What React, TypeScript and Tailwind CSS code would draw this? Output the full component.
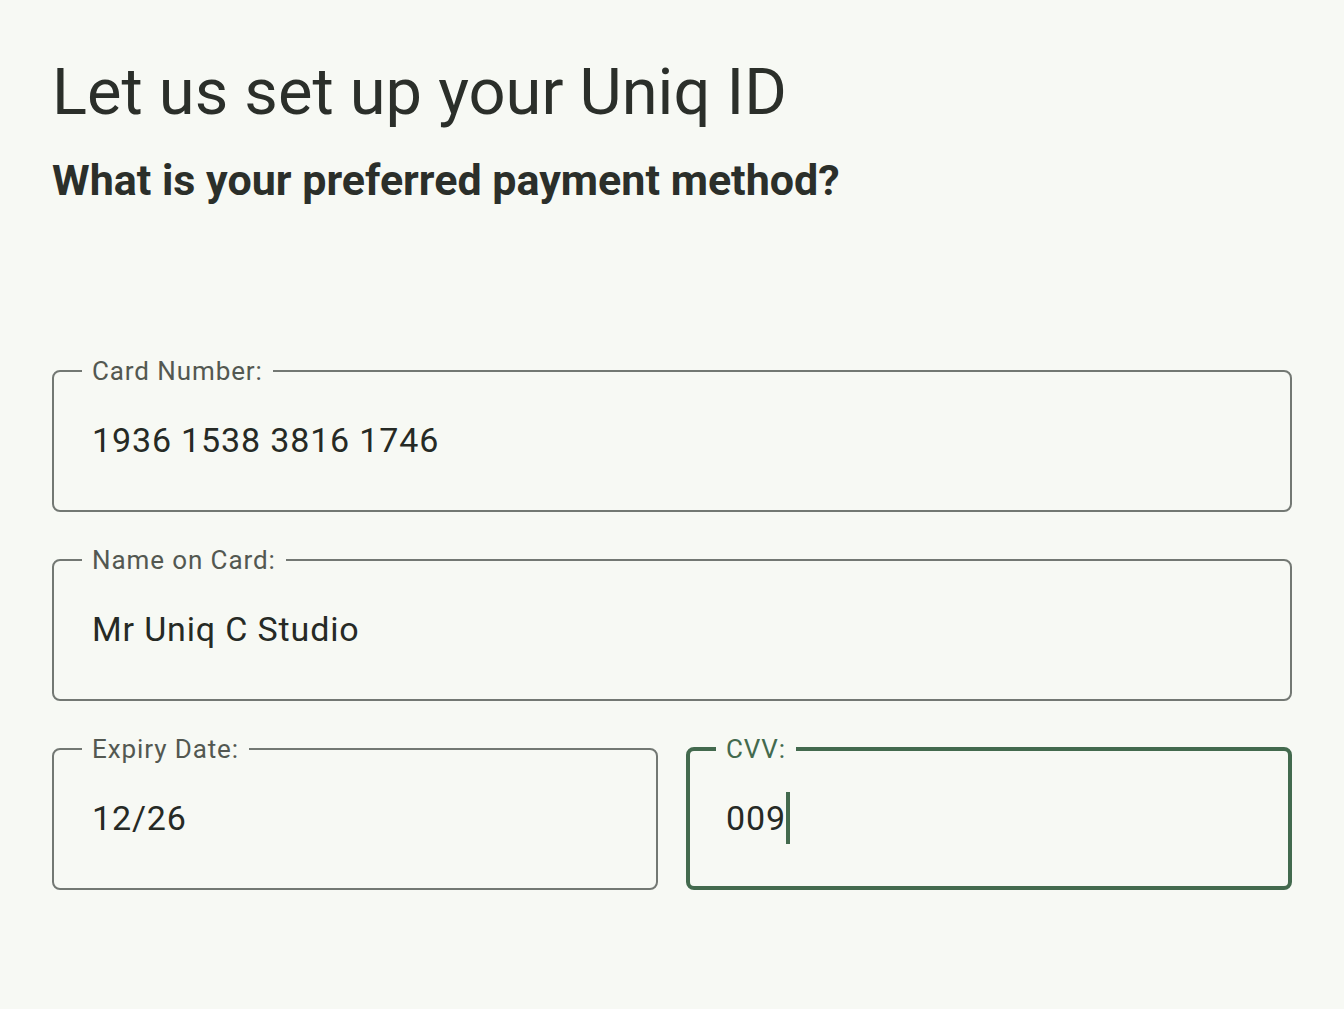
import { FC, ReactNode } from "react";

interface FieldProps {
  label: string;
  value: string;
  focused?: boolean;
  className?: string;
}

const OutlinedField: FC<FieldProps> = ({ label, value, focused, className }) => {
  return (
    <fieldset
      className={`${className ?? ""} h-[154px] rounded-[8px] ${
        focused ? "border-[4px] border-[#436a4e] px-[26px]" : "border-2 border-[#737873] px-[28px]"
      }`}
    >
      <legend
        className={`px-[10px] text-[26px] leading-[26px] tracking-[0.9px] ${
          focused ? "text-[#436a4e]" : "text-[#535851]"
        }`}
      >
        {label}
      </legend>
      <div className="flex h-[112px] items-center pl-[10px] text-[34px] tracking-[0.85px] text-[#262a25]">
        {value}
        {focused && <span className="inline-block h-[52px] w-[4px] bg-[#436a4e]" />}
      </div>
    </fieldset>
  );
};

const Section: FC<{ children: ReactNode }> = ({ children }) => <div className="flex flex-col">{children}</div>;

export default function App() {
  return (
    <div className="min-h-[1009px] w-full bg-[#f7f9f4] px-[52px] pt-[52px] font-['Roboto',sans-serif]">
      <h1 className="text-[65px] leading-[80px] text-[#2b2f2a]">Let us set up your Uniq ID</h1>
      <h2 className="mt-[22px] text-[43px] font-bold leading-[52px] text-[#2b2f2a]">What is your preferred payment method?</h2>
      <div className="mt-[152px]">
        <Section>
          <OutlinedField label="Card Number:" value="1936 1538 3816 1746" />
          <OutlinedField className="mt-[35px]" label="Name on Card:" value="Mr Uniq C Studio" />
          <div className="mt-[35px] grid grid-cols-2 gap-[28px]">
            <OutlinedField label="Expiry Date:" value="12/26" />
            <OutlinedField label="CVV:" value="009" focused />
          </div>
        </Section>
      </div>
    </div>
  );
}
